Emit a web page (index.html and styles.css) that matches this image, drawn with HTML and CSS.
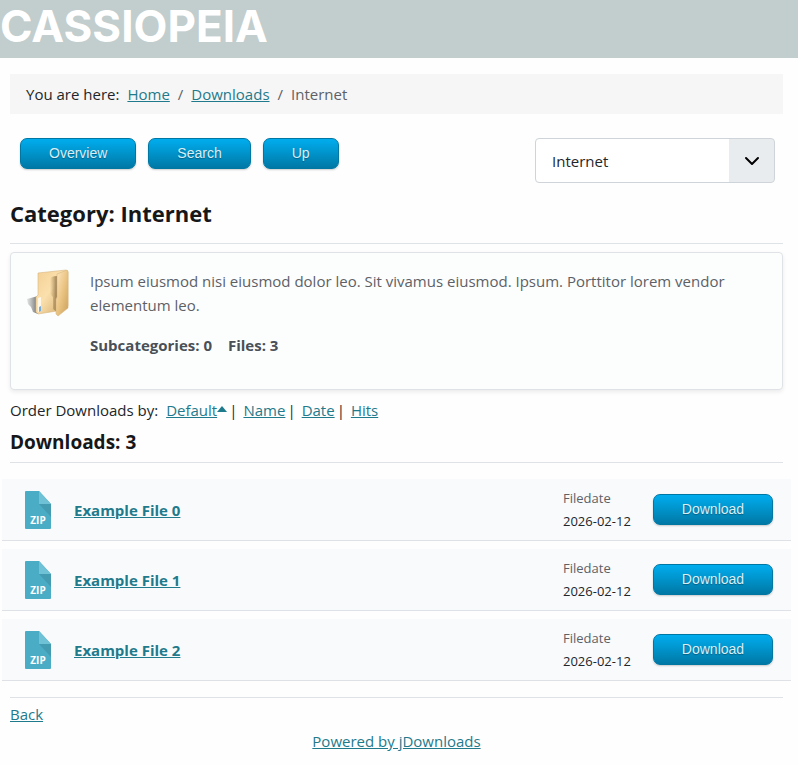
FILE: index.html
```html
<!DOCTYPE html>
<html lang="en">
<head>
  <meta charset="UTF-8">
  <meta name="viewport" content="width=device-width, initial-scale=1">
  <title>Category: Internet</title>
  <link rel="stylesheet" href="styles.css">
</head>
<body>
  <header class="header">
    <a class="brand" href="#">CASSIOPEIA</a>
  </header>

  <main class="container">
    <nav class="breadcrumb" aria-label="Breadcrumbs">
      <span class="here">You are here:</span>
      <a href="#">Home</a>
      <span class="divider">/</span>
      <a href="#">Downloads</a>
      <span class="divider">/</span>
      <span class="current">Internet</span>
    </nav>

    <div class="toolbar">
      <div class="toolbar-buttons">
        <button type="button" class="jd-button">Overview</button>
        <button type="button" class="jd-button">Search</button>
        <button type="button" class="jd-button">Up</button>
      </div>
      <div class="select-wrapper">
        <select class="form-select" id="category" aria-label="Category">
          <option>Internet</option>
        </select>
        <svg class="chevron" viewBox="0 0 16 16" aria-hidden="true">
          <path fill="none" stroke="#000" stroke-width="2" stroke-linecap="round" stroke-linejoin="round" d="M2 5l6 6 6-6"/>
        </svg>
      </div>
    </div>

    <h1>Category: Internet</h1>

    <section class="category">
      <svg class="folder" viewBox="0 0 48 48" aria-hidden="true">
        <defs>
          <linearGradient id="back" x1="0" y1="0" x2="1" y2="1">
            <stop offset="0" stop-color="#f3cf94"/>
            <stop offset=".45" stop-color="#fbe0ad"/>
            <stop offset="1" stop-color="#cda563"/>
          </linearGradient>
          <linearGradient id="front" x1="0" y1="0" x2="1" y2="1">
            <stop offset="0" stop-color="#ffe9c4"/>
            <stop offset=".5" stop-color="#ebc584"/>
            <stop offset="1" stop-color="#cba15c"/>
          </linearGradient>
          <linearGradient id="shade">
            <stop offset="0" stop-color="#8b6a38" stop-opacity="0"/>
            <stop offset="1" stop-color="#6f522a" stop-opacity=".7"/>
          </linearGradient>
          <linearGradient id="floor">
            <stop offset="0" stop-color="#777" stop-opacity=".2"/>
            <stop offset="1" stop-color="#444" stop-opacity=".8"/>
          </linearGradient>
        </defs>
        <path fill="url(#floor)" d="M0 30l11-3v18l-5-2-2-5-3-3z"/>
        <path fill="url(#back)" stroke="#d6b67f" stroke-width=".6" d="M11 4l28-3 2 2v34l-11 5-19 3-2-2V28l2-2z"/>
        <path fill="url(#shade)" d="M23 10q1-3 7-3v36l-4-3V28l-3-3z"/>
        <path fill="url(#front)" stroke="#d6b67f" stroke-width=".6" d="M30 5l10-4 1 1v37l-10 8-2-2V30l1-2z"/>
        <path fill="#fff8e9" d="M11 29l3-1v14l-3 1z"/>
        <path fill="#78add8" d="M12 38l2-1v5l-2 1z"/>
      </svg>
      <div class="category-body">
        <p class="description">Ipsum eiusmod nisi eiusmod dolor leo. Sit vivamus eiusmod. Ipsum. Porttitor lorem vendor elementum leo.</p>
        <div class="counts">
          <span>Subcategories: 0</span>
          <span>Files: 3</span>
        </div>
      </div>
    </section>

    <div class="order">
      <span class="order-label">Order Downloads by:</span>
      <span class="order-item"><span><a href="#">Default</a><svg class="caret" viewBox="0 0 10 6" aria-hidden="true"><path d="M5 0l5 6H0z"/></svg></span>|</span>
      <span class="order-item"><a href="#">Name</a>|</span>
      <span class="order-item"><a href="#">Date</a>|</span>
      <a href="#">Hits</a>
    </div>

    <h2>Downloads: 3</h2>

    <ul class="files">
      <li class="file">
        <svg class="file-icon" viewBox="0 0 26 38" aria-hidden="true">
          <path fill="#4bacc6" d="M0 1q0-1 1-1h13l12 13v24q0 1-1 1H1q-1 0-1-1z"/>
          <path fill="#439bb2" d="M14 13h12v13z"/>
          <path fill="#6fc1d5" d="M14 0l12 13H14z"/>
          <text x="13" y="33" text-anchor="middle" class="zip-text">ZIP</text>
        </svg>
        <a class="file-title" href="#">Example File 0</a>
        <div class="file-date">
          <span class="label">Filedate</span>
          <span>2026-02-12</span>
        </div>
        <button type="button" class="jd-button download">Download</button>
      </li>
      <li class="file">
        <svg class="file-icon" viewBox="0 0 26 38" aria-hidden="true">
          <path fill="#4bacc6" d="M0 1q0-1 1-1h13l12 13v24q0 1-1 1H1q-1 0-1-1z"/>
          <path fill="#439bb2" d="M14 13h12v13z"/>
          <path fill="#6fc1d5" d="M14 0l12 13H14z"/>
          <text x="13" y="33" text-anchor="middle" class="zip-text">ZIP</text>
        </svg>
        <a class="file-title" href="#">Example File 1</a>
        <div class="file-date">
          <span class="label">Filedate</span>
          <span>2026-02-12</span>
        </div>
        <button type="button" class="jd-button download">Download</button>
      </li>
      <li class="file">
        <svg class="file-icon" viewBox="0 0 26 38" aria-hidden="true">
          <path fill="#4bacc6" d="M0 1q0-1 1-1h13l12 13v24q0 1-1 1H1q-1 0-1-1z"/>
          <path fill="#439bb2" d="M14 13h12v13z"/>
          <path fill="#6fc1d5" d="M14 0l12 13H14z"/>
          <text x="13" y="33" text-anchor="middle" class="zip-text">ZIP</text>
        </svg>
        <a class="file-title" href="#">Example File 2</a>
        <div class="file-date">
          <span class="label">Filedate</span>
          <span>2026-02-12</span>
        </div>
        <button type="button" class="jd-button download">Download</button>
      </li>
    </ul>

    <footer class="footer">
      <a href="#">Back</a>
      <a class="powered" href="#">Powered by jDownloads</a>
    </footer>
  </main>
</body>
</html>
```
FILE: styles.css
```css
*, *::before, *::after { box-sizing: border-box; }

body {
  margin: 0;
  background: #fefefe;
  color: #22262a;
  font-family: "Segoe UI", "Open Sans", "Noto Sans", sans-serif;
  font-size: 15px;
  line-height: 24px;
}

a { color: #1f7a8c; }

/* Header */
.header {
  height: 58px;
  padding: 2px 0;
  background: #c2cdce;
}
.brand {
  display: block;
  color: #fff;
  font-family: Inter, sans-serif;
  font-size: 44px;
  font-weight: 700;
  line-height: 48px;
  text-decoration: none;
}

.container { padding: 16px 15px 12px 10px; }

/* Breadcrumbs */
.breadcrumb {
  display: flex;
  gap: 8px;
  padding: 8px 16px;
  background: #f6f6f6;
}
.divider, .current { color: #5d6166; }

/* Toolbar */
.toolbar {
  display: flex;
  justify-content: space-between;
  align-items: flex-start;
  padding: 24px 8px 0 10px;
}
.toolbar-buttons {
  display: flex;
  gap: 12px;
}
.jd-button {
  padding: 6px 28px;
  border: 1px solid #0076a3;
  border-radius: 7px;
  background: linear-gradient(#00adee, #0078a5);
  box-shadow: 0 1px 2px rgba(0, 0, 0, .2);
  color: #d9eef7;
  font: 14px/17px "Liberation Sans", Arial, sans-serif;
  text-shadow: 0 1px 1px rgba(0, 0, 0, .3);
  cursor: pointer;
}
.jd-button:hover { background: linear-gradient(#0095cc, #00678e); }

.select-wrapper {
  position: relative;
  width: 240px;
}
.form-select {
  display: block;
  width: 100%;
  height: 45px;
  padding: 0 60px 0 16px;
  border: 1px solid #ced4da;
  border-radius: 4px;
  background: linear-gradient(to left, #e9ecef 45px, #fff 45px);
  color: #22262a;
  font: inherit;
  appearance: none;
}
.chevron {
  position: absolute;
  top: 15px;
  right: 15px;
  width: 16px;
  height: 16px;
  pointer-events: none;
}

/* Headings */
h1, h2 {
  margin: 0;
  border-bottom: 1px solid #dfe3e7;
  color: #161719;
  font-weight: 700;
}
h1 {
  padding: 15px 0;
  font-size: 22px;
  line-height: 30px;
}
h2 {
  padding: 8px 0;
  font-size: 19px;
  line-height: 24px;
}

/* Category card */
.category {
  display: flex;
  gap: 12px;
  min-height: 138px;
  margin-top: 8px;
  padding: 16px;
  border: 1px solid #dfe3e7;
  border-radius: 4px;
  background: #fcfefe;
  box-shadow: 0 2px 4px rgba(0, 0, 0, .08);
}
.folder {
  flex: none;
  width: 48px;
  height: 48px;
}
.category-body { padding: 0 3px; }
.description {
  margin: 0 0 16px;
  color: #5d6166;
}
.counts {
  display: flex;
  gap: 16px;
  color: #495057;
  font-weight: 700;
}

/* Sorting */
.order {
  display: flex;
  flex-wrap: wrap;
  gap: 6px;
  padding-top: 8px;
}
.order-label { margin-right: 2px; }
.order-item {
  display: flex;
  gap: 2px;
}
.caret {
  width: 10px;
  height: 6px;
  margin-bottom: 4px;
  fill: #1f7a8c;
}

/* File list */
.files {
  display: grid;
  gap: 8px;
  margin: 16px -8px;
  padding: 0;
  list-style: none;
}
.file {
  display: flex;
  align-items: center;
  min-height: 62px;
  padding: 0 18px 0 23px;
  border-bottom: 1px solid #dee2e6;
  background: #f9fafc;
}
.file-icon {
  width: 26px;
  height: 38px;
  margin-right: 23px;
}
.zip-text {
  fill: #fff;
  font: 700 10px "Open Sans", sans-serif;
}
.file-title {
  flex: 1;
  font-weight: 700;
}
.file-date {
  display: flex;
  flex-direction: column;
  width: 90px;
  font-size: 13px;
  line-height: 23px;
}
.file-date .label { color: #5d6166; }
.download {
  width: 120px;
  padding: 6px 0;
}

/* Footer */
.footer {
  display: flex;
  flex-direction: column;
  align-items: flex-start;
  gap: 3px;
  padding-top: 4px;
  border-top: 1px solid #dfe3e7;
}
.powered { align-self: center; }
```
